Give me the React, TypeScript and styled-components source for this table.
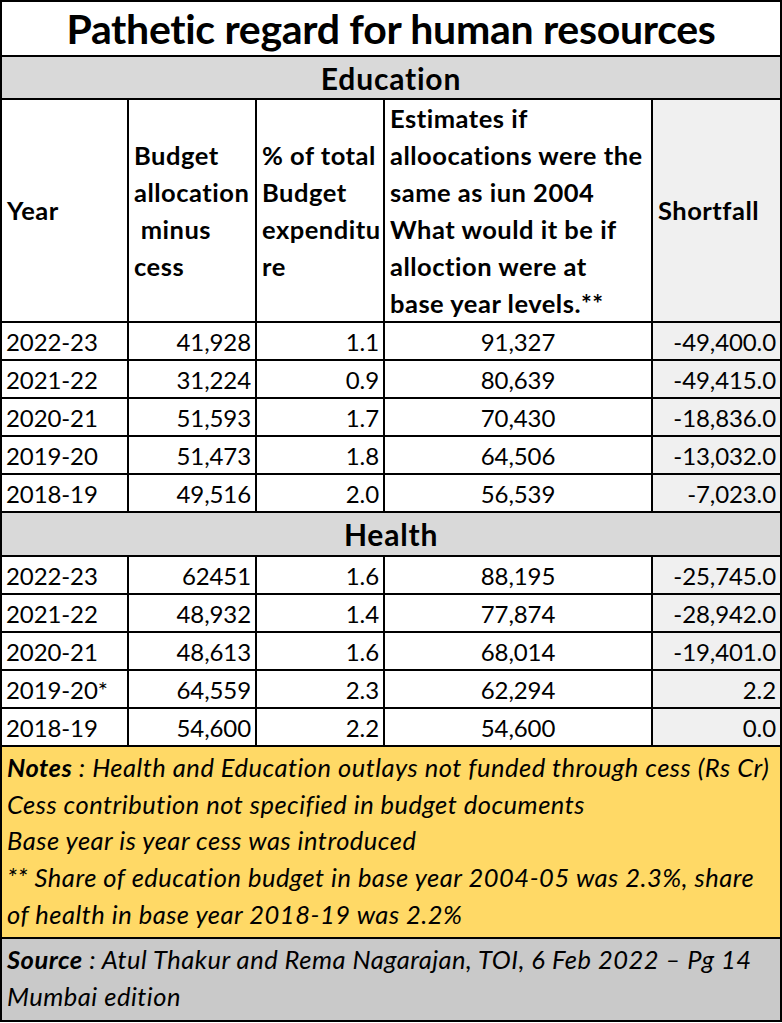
import React from "react";
import styled, { createGlobalStyle } from "styled-components";

const GlobalStyle = createGlobalStyle`
  html, body { margin: 0; padding: 0; background: #ffffff; }
  body { font-family: "Lato", "Open Sans", sans-serif; color: #000; }
`;

const Sheet = styled.div`
  width: 782px;
  box-sizing: border-box;
  display: grid;
  grid-template-columns: 125px 126px 126px 266px 127px;
  gap: 2px;
  padding: 2px;
  background: #000;
  font-family: "Lato", "Open Sans", sans-serif;
`;

const Title = styled.div`
  grid-column: 1 / -1;
  height: 53px;
  background: #fff;
  display: flex;
  align-items: center;
  justify-content: center;
  font-weight: 700;
  font-size: 41px;
  letter-spacing: -0.3px;
  white-space: nowrap;
`;

const Band = styled.div<{ $h: number }>`
  grid-column: 1 / -1;
  height: ${(p) => p.$h}px;
  background: #d9d9d9;
  display: flex;
  align-items: center;
  justify-content: center;
  font-weight: 700;
  font-size: 30px;
  letter-spacing: 0.8px;
`;

const HeadCell = styled.div<{ $shade?: boolean }>`
  height: 221px;
  box-sizing: border-box;
  padding: 0 0 0 5px;
  background: ${(p) => (p.$shade ? "#f0f0f0" : "#fff")};
  display: flex;
  flex-direction: column;
  justify-content: center;
  font-weight: 700;
  font-size: 25.5px;
  line-height: 37px;
  letter-spacing: 0.5px;
  white-space: pre;
  overflow: hidden;
`;

const Cell = styled.div<{ $align: "left" | "right" | "center"; $shade?: boolean }>`
  height: 36px;
  box-sizing: border-box;
  background: ${(p) => (p.$shade ? "#f0f0f0" : "#fff")};
  display: flex;
  align-items: center;
  justify-content: ${(p) =>
    p.$align === "left" ? "flex-start" : p.$align === "right" ? "flex-end" : "center"};
  padding: ${(p) => (p.$align === "left" ? "0 0 0 4px" : p.$align === "right" ? "0 4px 0 0" : "0")};
  font-size: 24px;
  letter-spacing: -0.1px;
  white-space: nowrap;
`;

const NoteBox = styled.div<{ $bg: string; $h: number }>`
  grid-column: 1 / -1;
  height: ${(p) => p.$h}px;
  box-sizing: border-box;
  background: ${(p) => p.$bg};
  padding: 2px 0 0 5px;
  font-style: italic;
  font-size: 25.5px;
  line-height: 36.7px;
  letter-spacing: 0.5px;
`;

const NoteLine = styled.div`
  white-space: nowrap;
`;

const Lead = styled.b`
  font-weight: 700;
`;

type Row = [string, string, string, string, string];

const education: Row[] = [
  ["2022-23", "41,928", "1.1", "91,327", "-49,400.0"],
  ["2021-22", "31,224", "0.9", "80,639", "-49,415.0"],
  ["2020-21", "51,593", "1.7", "70,430", "-18,836.0"],
  ["2019-20", "51,473", "1.8", "64,506", "-13,032.0"],
  ["2018-19", "49,516", "2.0", "56,539", "-7,023.0"],
];

const health: Row[] = [
  ["2022-23", "62451", "1.6", "88,195", "-25,745.0"],
  ["2021-22", "48,932", "1.4", "77,874", "-28,942.0"],
  ["2020-21", "48,613", "1.6", "68,014", "-19,401.0"],
  ["2019-20*", "64,559", "2.3", "62,294", "2.2"],
  ["2018-19", "54,600", "2.2", "54,600", "0.0"],
];

const DataRows: React.FC<{ rows: Row[] }> = ({ rows }) => (
  <>
    {rows.map((r) => (
      <React.Fragment key={r[0]}>
        <Cell $align="left">{r[0]}</Cell>
        <Cell $align="right">{r[1]}</Cell>
        <Cell $align="right">{r[2]}</Cell>
        <Cell $align="center">{r[3]}</Cell>
        <Cell $align="right" $shade>
          {r[4]}
        </Cell>
      </React.Fragment>
    ))}
  </>
);

export default function App() {
  return (
    <>
      <GlobalStyle />
      <Sheet>
        <Title>Pathetic regard for human resources</Title>
        <Band $h={41}>Education</Band>
        <HeadCell>Year</HeadCell>
        <HeadCell>{"Budget\nallocation\n minus\ncess"}</HeadCell>
        <HeadCell>{"% of total\nBudget\nexpenditu\nre"}</HeadCell>
        <HeadCell>
          {"Estimates if\nalloocations were the\nsame as iun 2004\nWhat would it be if\nalloction were at\nbase year levels.**"}
        </HeadCell>
        <HeadCell $shade>Shortfall</HeadCell>
        <DataRows rows={education} />
        <Band $h={42}>Health</Band>
        <DataRows rows={health} />
        <NoteBox $bg="#ffd966" $h={190}>
          <NoteLine>
            <Lead>Notes</Lead> : Health and Education outlays not funded through cess (Rs Cr)
          </NoteLine>
          <NoteLine>Cess contribution not specified in budget documents</NoteLine>
          <NoteLine>Base year is year cess was introduced</NoteLine>
          <NoteLine>** Share of education budget in base year 2004-05 was 2.3%, share</NoteLine>
          <NoteLine>of health in base year 2018-19 was 2.2%</NoteLine>
        </NoteBox>
        <NoteBox $bg="#c9c9c9" $h={81}>
          <NoteLine>
            <Lead>Source</Lead> : Atul Thakur and Rema Nagarajan, TOI, 6 Feb 2022 – Pg 14
          </NoteLine>
          <NoteLine>Mumbai edition</NoteLine>
        </NoteBox>
      </Sheet>
    </>
  );
}
